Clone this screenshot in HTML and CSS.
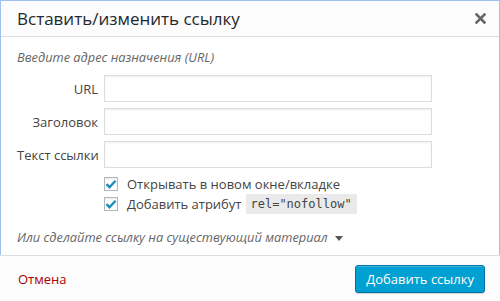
FILE: index.html
```html
<!DOCTYPE html>
<html lang="ru">
<head>
    <meta charset="UTF-8">
    <title>Вставить/изменить ссылку</title>
    <link rel="stylesheet" href="styles.css">
</head>
<body>
    <div class="dialog">
        <div class="dialog-head">
            <h1>Вставить/изменить ссылку</h1>
            <button class="close-btn" aria-label="Закрыть">
                <svg width="11" height="11" viewBox="0 0 11 11"><path d="M1.5 1.5l8 8M9.5 1.5l-8 8" stroke="#666" stroke-width="2.6" stroke-linecap="square"/></svg>
            </button>
        </div>
        <div class="dialog-body">
            <p class="howto">Введите адрес назначения (URL)</p>
            <div class="fields">
                <label class="field">
                    <span class="field-label">URL</span>
                    <input type="text">
                </label>
                <label class="field">
                    <span class="field-label">Заголовок</span>
                    <input type="text">
                </label>
                <label class="field">
                    <span class="field-label">Текст ссылки</span>
                    <input type="text">
                </label>
            </div>
            <div class="options">
                <div class="option">
                    <span class="check"><svg width="12" height="10" viewBox="0 0 12 10"><path d="M1.5 5.2l3 3L10.5 1.8" fill="none" stroke="#1e8cbe" stroke-width="2.4"/></svg></span>
                    <span>Открывать в новом окне/вкладке</span>
                </div>
                <div class="option">
                    <span class="check"><svg width="12" height="10" viewBox="0 0 12 10"><path d="M1.5 5.2l3 3L10.5 1.8" fill="none" stroke="#1e8cbe" stroke-width="2.4"/></svg></span>
                    <span>Добавить атрибут</span>
                    <code>rel="nofollow"</code>
                </div>
            </div>
            <p class="toggle">Или сделайте ссылку на существующий материал <span class="arrow"></span></p>
        </div>
    </div>
    <div class="dialog-foot">
        <a href="#" class="cancel">Отмена</a>
        <button class="primary-btn">Добавить ссылку</button>
    </div>
</body>
</html>
```

FILE: styles.css
```css
body {
    margin: 0;
    background: #fff;
    font-family: 'Open Sans', 'Liberation Sans', sans-serif;
    font-size: 13px;
    color: #444;
}

.dialog {
    border: 1px solid #9dc1f4;
    border-bottom: none;
}

.dialog-head {
    display: flex;
    justify-content: space-between;
    align-items: center;
    height: 35px;
    background: #fcfcfc;
    border-bottom: 1px solid #ddd;
    padding: 0 11px 0 16px;
}

.dialog-head h1 {
    margin: 0;
    font-size: 17px;
    font-weight: 400;
    color: #23282d;
}

.close-btn {
    border: none;
    background: none;
    padding: 0;
    width: 16px;
    height: 16px;
    display: flex;
    align-items: center;
    justify-content: center;
}

.dialog-body {
    height: 208px;
    padding: 10px 16px 0 16px;
    background: #fff;
}

.howto {
    margin: 0;
    line-height: 20px;
    font-style: italic;
    color: #666;
    font-size: 12.8px;
}

.fields {
    display: flex;
    flex-direction: column;
    gap: 6px;
    margin-top: 8px;
}

.field {
    display: flex;
    align-items: center;
    gap: 6px;
}

.field-label {
    flex-shrink: 0;
    width: 81px;
    white-space: nowrap;
    text-align: right;
    color: #444;
}

.field input {
    box-sizing: border-box;
    width: 328px;
    height: 27px;
    margin: 0;
    border: 1px solid #ddd;
    box-shadow: inset 0 1px 2px rgba(0, 0, 0, 0.07);
    font: inherit;
}

.options {
    display: flex;
    flex-direction: column;
    margin-top: 6px;
    padding-left: 86px;
}

.option {
    display: flex;
    align-items: center;
    height: 20px;
    gap: 9px;
}

.check {
    box-sizing: border-box;
    width: 14px;
    height: 14px;
    border: 1px solid #b4b9be;
    background: #fff;
    box-shadow: inset 0 1px 2px rgba(0, 0, 0, 0.1);
    display: flex;
    align-items: center;
    justify-content: center;
    margin-left: 1px;
}

code {
    font-family: 'DejaVu Sans Mono', 'Liberation Mono', monospace;
    font-size: 12px;
    line-height: 20px;
    background: #eaeaea;
    padding: 0 5px;
    margin-left: -5px;
    color: #444;
}

.toggle {
    margin: 13px 0 0 0;
    line-height: 20px;
    font-style: italic;
    color: #666;
    font-size: 12.8px;
}

.arrow {
    display: inline-block;
    margin-left: 4px;
    border-left: 4px solid transparent;
    border-right: 4px solid transparent;
    border-top: 5px solid #555;
    vertical-align: 1px;
}

.dialog-foot {
    display: flex;
    justify-content: space-between;
    align-items: center;
    height: 45px;
    border-top: 1px solid #ddd;
    background: #fcfcfc;
    padding: 0 15px 0 18px;
}

.cancel {
    color: #a00;
    text-decoration: none;
}

.primary-btn {
    height: 28px;
    padding: 0 10px;
    background: #00a0d2;
    border: 1px solid #0073aa;
    border-radius: 3px;
    box-shadow: inset 0 1px 0 rgba(120, 200, 230, 0.5), 0 1px 0 rgba(0, 0, 0, 0.15);
    color: #fff;
    font: inherit;
    font-size: 13px;
}
```
